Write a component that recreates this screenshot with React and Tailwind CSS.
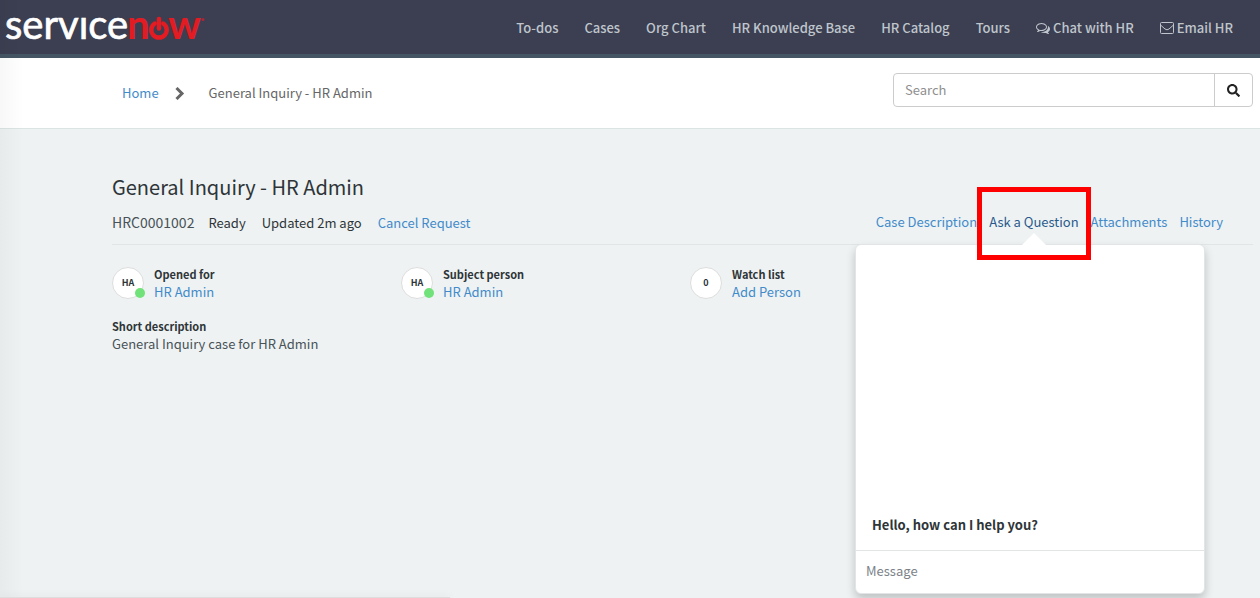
import { FaSearch } from "react-icons/fa";

const navLinks = ["To-dos", "Cases", "Org Chart", "HR Knowledge Base", "HR Catalog", "Tours"];

const people = [
  { initials: "HA", label: "Opened for", action: "HR Admin", online: true },
  { initials: "HA", label: "Subject person", action: "HR Admin", online: true },
  { initials: "0", label: "Watch list", action: "Add Person", online: false },
];

const Logo = () => (
  <a href="#home" aria-label="servicenow" className="block shrink-0">
    <svg width="202" height="54" viewBox="0 0 202 54" fontFamily="Lato, sans-serif" fontSize="41">
      <text x="0" y="39" fontSize="40" fontWeight="400" fill="#ffffff" stroke="#ffffff" strokeWidth="0.7">
        servıce
      </text>
      <text x="122" y="39" fontSize="40" fontWeight="700" fill="#e31b23">
        n
      </text>
      <g fill="none" stroke="#e31b23" strokeWidth="4.5" strokeLinecap="round">
        <path d="M149.700 23.500a7.700 7.700 0 1 0 8.600 0" />
        <path d="M154 19v9.500" />
      </g>
      <text x="163" y="39" fontWeight="700" fill="#e31b23">
        w
      </text>
      <circle cx="198" cy="19.500" r="1.500" fill="#e31b23" opacity="0.7" />
    </svg>
  </a>
);

const ChatIcon = () => (
  <svg width="14" height="14" viewBox="0 0 1792 1792" fill="currentColor" aria-hidden="true">
    <path d="M704 384q-153 0-286 52t-211.500 141-78.500 191q0 82 53 158t149 132l97 56-35 84q34-20 62-39l44-31 53 10q78 14 153 14 153 0 286-52t211.500-141 78.500-191-78.500-191-211.500-141-286-52zm0-128q191 0 353.500 68.500t256.500 186.500 94 257-94 257-256.500 186.500-353.500 68.500q-86 0-176-16-124 88-278 128-36 9-86 16h-3q-11 0-20.500-8t-11.500-21q-1-3-1-6.500t.5-6.500 2-6l2.500-5 3.500-5.500 4-5 4.500-5 4-4.500q5-6 23-25t26-29.500 22.500-29 25-38.500 20.500-44q-124-72-195-177t-71-224q0-139 94-257t256.500-186.500 353.500-68.500zm822 1169q10 24 20.500 44t25 38.500 22.500 29 26 29.500 23 25q1 1 4 4.500t4.500 5 4 5 3.500 5.500l2.500 5 2 6 .5 6.500-1 6.500q-3 14-13 22t-22 7q-50-7-86-16-154-40-278-128-90 16-176 16-271 0-472-132 58 4 88 4 161 0 309-45t264-129q125-92 192-212t67-254q0-77-23-152 129 71 204 178t75 230q0 120-71 224.500t-195 176.500z" />
  </svg>
);

const MailIcon = () => (
  <svg
    width="14"
    height="14"
    viewBox="0 0 14 14"
    fill="none"
    stroke="currentColor"
    strokeLinejoin="round"
    aria-hidden="true"
  >
    <rect x="0.500" y="1.500" width="13" height="11" rx="1" />
    <path d="M0.500 4l4.500 4q2 1.600 4 0l4.500-4" />
  </svg>
);

const ChevronIcon = () => (
  <svg
    width="10"
    height="13"
    viewBox="0 0 10 13"
    fill="none"
    stroke="currentColor"
    strokeWidth="3"
    aria-hidden="true"
    className="mr-6 ml-4"
  >
    <path d="M1.500 1l5.500 5.500-5.500 5.500" />
  </svg>
);

const Header = () => (
  <header className="flex h-[58px] items-center justify-between border-b-4 border-[#465564] bg-[#3c3f51] pr-[27px] pl-[5px]">
    <Logo />
    <nav className="flex items-center gap-[26px] pt-px text-[13px] font-medium text-[#bfc5cc]">
      {navLinks.map((link) => (
        <a key={link} href="#nav">
          {link}
        </a>
      ))}
      <a href="#chat" className="flex items-center gap-[3px]">
        <ChatIcon />
        Chat with HR
      </a>
      <a href="#email" className="flex items-center gap-[3px]">
        <MailIcon />
        Email HR
      </a>
    </nav>
  </header>
);

const Breadcrumbs = () => (
  <div className="flex h-[71px] items-start justify-between border-b border-[#dce3e5] bg-white pt-[15px] pr-[7px] pl-[122px]">
    <nav aria-label="Breadcrumb" className="flex h-10 items-center text-[13px] text-[#666666]">
      <a href="#home" className="text-[#428bca]">
        Home
      </a>
      <ChevronIcon />
      <span>General Inquiry - HR Admin</span>
    </nav>
    <form className="flex h-[34px] w-[360px] rounded border border-[#cccccc]">
      <input
        type="text"
        aria-label="Search"
        placeholder="Search"
        className="min-w-0 flex-1 rounded-l px-[11px] text-[13px] outline-none placeholder:text-[#8f8f8f]"
      />
      <button
        type="button"
        aria-label="Submit search"
        className="flex w-[38px] items-center justify-center border-l border-[#cccccc] text-[#222222]"
      >
        <FaSearch size={13} />
      </button>
    </form>
  </div>
);

const Person = ({ initials, label, action, online }) => (
  <div className="flex w-[289px] items-center gap-[10px]">
    <div className="relative flex size-8 items-center justify-center rounded-full border border-[#dddddd] bg-white text-[9px] font-bold">
      {initials}
      {online && <span className="absolute -right-[2px] bottom-0 size-[10px] rounded-full bg-[#71e279]" />}
    </div>
    <div>
      <p className="text-[11px] leading-[18px] font-bold">{label}</p>
      <a href="#person" className="block text-[13px] leading-[18px] text-[#428bca]">
        {action}
      </a>
    </div>
  </div>
);

const ChatPanel = () => (
  <section className="absolute top-full right-12 z-10 flex h-[350px] w-[350px] flex-col rounded-md border border-[#e1e5e6] bg-white shadow-[0_5px_10px_rgba(0,0,0,0.2)]">
    <p className="flex flex-1 items-end px-4 pb-4 text-[13px] leading-[18px] font-bold">Hello, how can I help you?</p>
    <input
      type="text"
      aria-label="Message"
      placeholder="Message"
      className="h-[43px] w-full rounded-b-md border-t border-[#e1e5e6] px-[10px] pb-1 text-[13px] outline-none placeholder:text-[#7b8288]"
    />
  </section>
);

const CaseTabs = () => (
  <nav className="flex h-full items-center gap-3 pr-[30px] text-[13px] text-[#428bca]">
    <a href="#description">Case Description</a>
    <div className="relative flex h-full items-center">
      <a href="#question" className="text-[#2a5a8c]">
        Ask a Question
      </a>
      <span className="absolute -bottom-[2px] left-1/2 z-20 size-0 -translate-x-1/2 border-x-12 border-b-12 border-x-transparent border-b-white" />
      <span className="absolute -inset-x-3 -top-[14px] -bottom-[17px] z-30 border-5 border-[#ff0000]" />
    </div>
    <a href="#attachments">Attachments</a>
    <a href="#history">History</a>
  </nav>
);

const App = () => {
  return (
    <div className="relative min-h-screen overflow-hidden bg-[#eef2f3] font-['Noto_Sans_CJK_SC',sans-serif] text-[#2e3538]">
      <Header />
      <Breadcrumbs />

      <main className="pr-[7px] pl-[112px]">
        <h1 className="pt-11 text-[20px] leading-[28px]">General Inquiry - HR Admin</h1>
        <div className="relative border-b border-[#e0e5e6] pb-px">
          <div className="flex h-[42px] items-center justify-between">
            <div className="flex items-baseline text-[13px]">
              <span className="mr-[14px] text-[14px] text-[#485257]">HRC0001002</span>
              <span className="mr-4">Ready</span>
              <span className="mr-4">Updated 2m ago</span>
              <a href="#cancel" className="text-[#428bca]">
                Cancel Request
              </a>
            </div>
            <CaseTabs />
          </div>
          <ChatPanel />
        </div>

        <div className="flex pt-5">
          {people.map((person) => (
            <Person key={person.label} {...person} />
          ))}
        </div>
        <div className="pt-4">
          <p className="text-[11px] leading-[18px] font-bold">Short description</p>
          <p className="text-[13px] leading-[18px] text-[#485257]">General Inquiry case for HR Admin</p>
        </div>
      </main>

      <div className="pointer-events-none absolute inset-y-0 left-0 w-6 bg-linear-to-r from-black/3 to-transparent" />
      <div className="pointer-events-none fixed bottom-0 left-0 h-px w-[450px] bg-[#dddddd] shadow-[0_0_8px_rgba(0,0,0,0.2)]" />
    </div>
  );
};

export default App;
